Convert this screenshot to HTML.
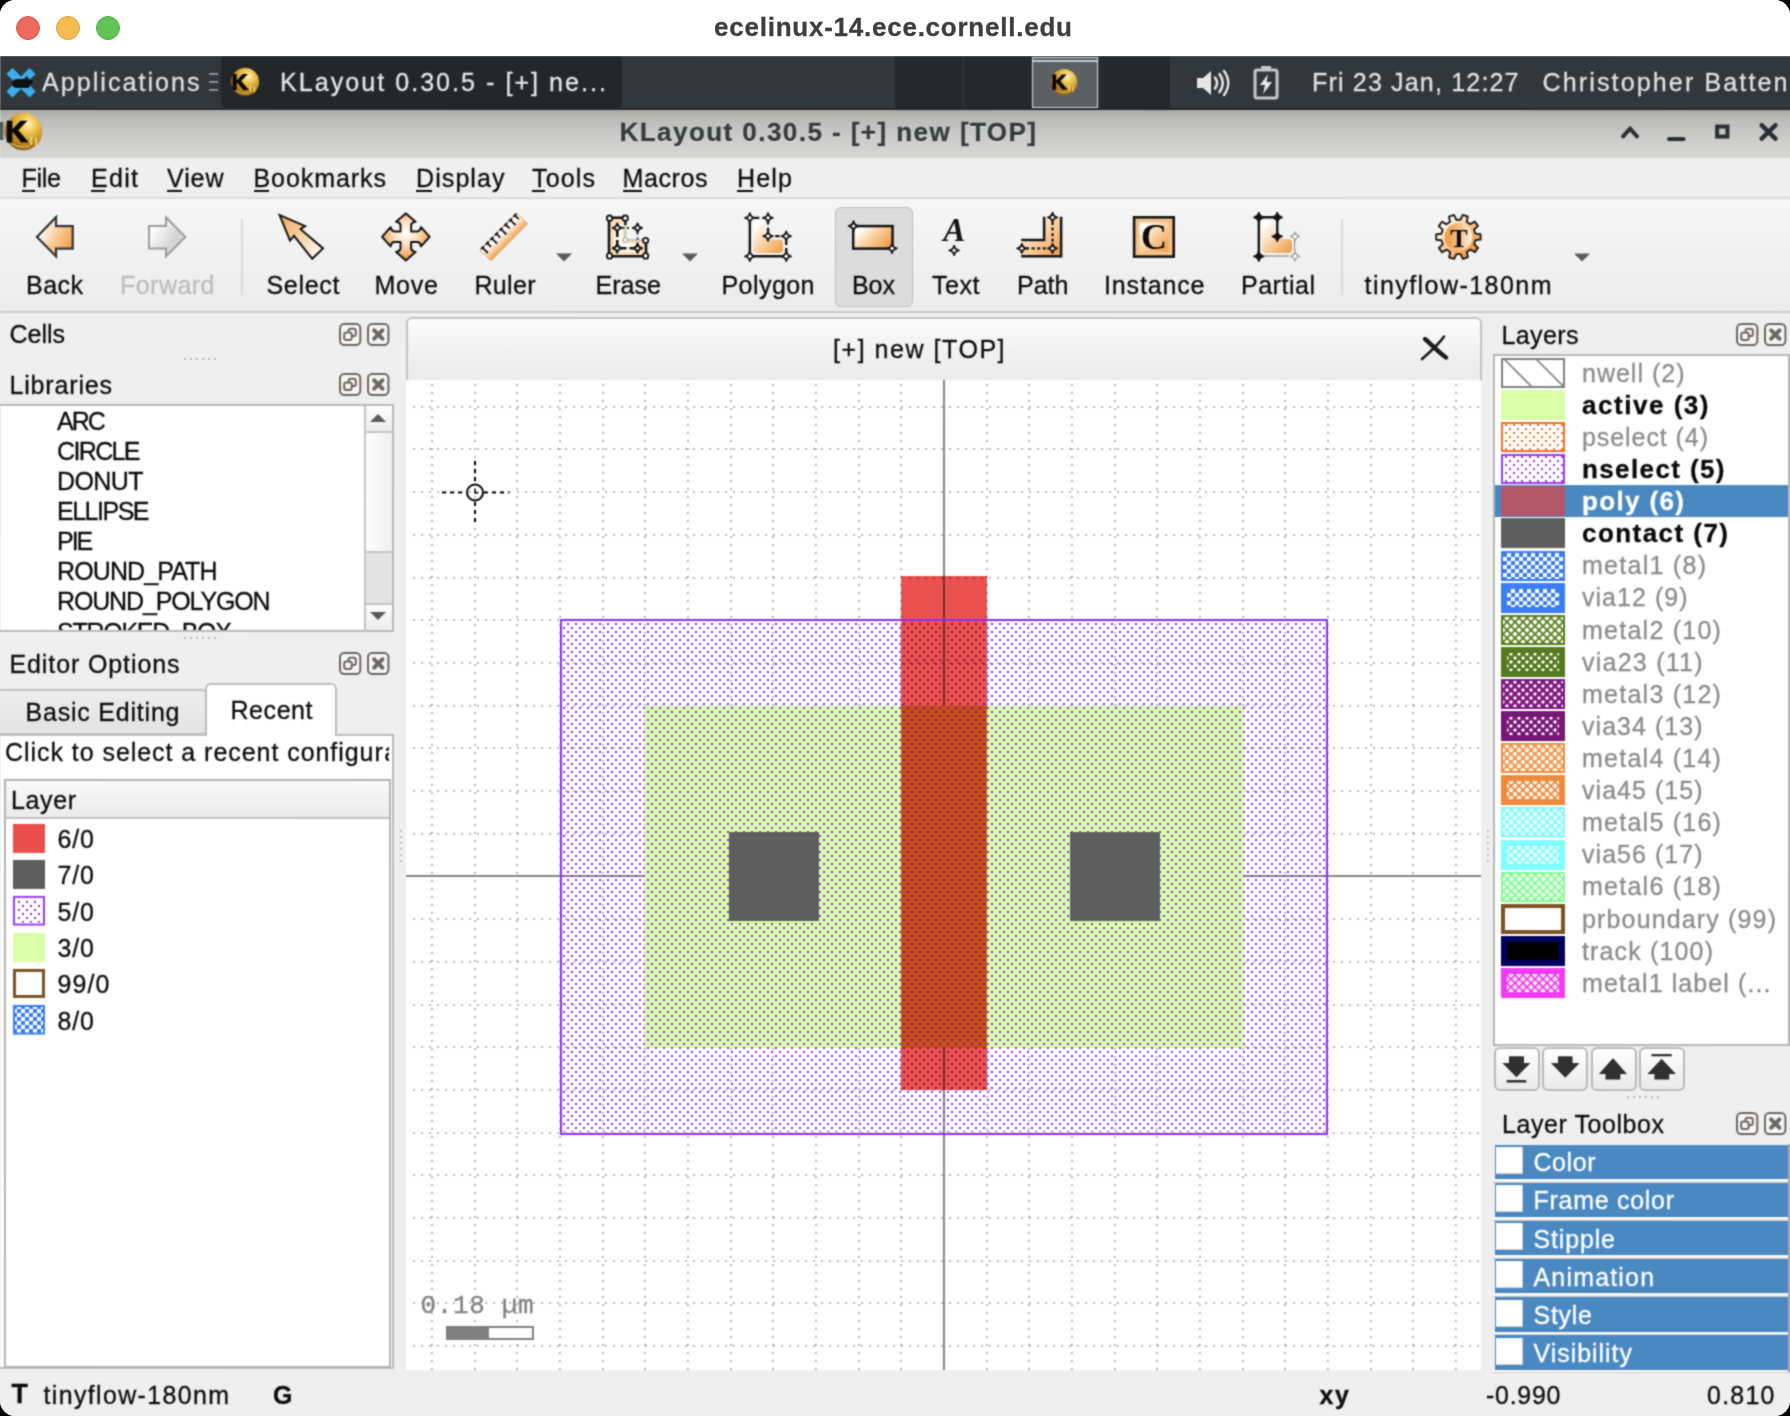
<!DOCTYPE html>
<html><head><meta charset="utf-8"><title>KLayout</title>
<style>

html,body{margin:0;padding:0;background:#000;}
body{width:1790px;height:1416px;overflow:hidden;}
#root{position:absolute;left:0;top:0;width:1790px;height:1416px;overflow:hidden;background:#efefef;border-radius:15.5px;font-family:"Liberation Sans",sans-serif;}
#root div,#root span.t,#root svg{position:absolute;box-sizing:border-box;}
span.t{white-space:pre;line-height:1;-webkit-text-stroke:0.3px;}

</style></head>
<body>
<div id="root">
<svg style="left:0;top:0" width="0" height="0"><defs><filter id="sblur" x="0" y="0" width="100%" height="100%" color-interpolation-filters="sRGB"><feConvolveMatrix order="3" kernelMatrix="1 3 1 3 9 3 1 3 1" divisor="25" edgeMode="duplicate"/></filter></defs></svg><div id="x" style="left:0;top:0;width:1790px;height:1416px;background:#efefef;filter:url(#sblur);transform:rotate(0.004deg);"><div style="left:0px;top:56px;width:1790px;height:54px;background:#32373b;"></div><div style="left:0px;top:108px;width:1790px;height:2px;background:#24282b;"></div><div style="left:221px;top:56px;width:401px;height:52px;background:#23272a;border-radius:5px;"></div><div style="left:895px;top:56px;width:275px;height:52px;background:#25292c;"></div><div style="left:962px;top:56px;width:2px;height:52px;background:#2e3236;"></div><div style="left:1031px;top:56px;width:2px;height:52px;background:#2e3236;"></div><div style="left:1098px;top:56px;width:2px;height:52px;background:#2e3236;"></div><div style="left:1032px;top:57px;width:66px;height:51px;background:#5d6063;border:1.5px solid #d8d9d9;"></div><div style="left:1033px;top:60px;width:64px;height:1.5px;background:#c4c5c6;"></div><svg style="left:4px;top:66px" width="34" height="34" viewBox="0 0 34 34"><path d="M5.5 5 L28.5 28.5 M28.5 5 L5.5 28.5" stroke="#3daee9" stroke-width="8.5" stroke-linecap="butt"/><path d="M8 17.5 q0 -4.5 6 -4.5 h6 l3 -3 l1.5 3 q4 0.5 4.5 3 q0 2 -3 2.5 l-1 3.5 h-13 q-4 -0.5 -4 -4.5 z" fill="#0e1113"/></svg><span class="t" style='left:42.0px;top:69.5px;font-size:25px;color:#dfe0e0;letter-spacing:2.06px;'>Applications</span><div style="left:209px;top:73px;width:9px;height:2px;background:#8a8d8f;"></div><div style="left:209px;top:81px;width:9px;height:2px;background:#8a8d8f;"></div><div style="left:209px;top:89px;width:9px;height:2px;background:#8a8d8f;"></div><svg style="left:229px;top:66px" width="32" height="32" viewBox="-16 -16 32 32"><defs><radialGradient id="kg245_82" cx="0.62" cy="0.3" r="0.8"><stop offset="0" stop-color="#fff6b8"/><stop offset="0.3" stop-color="#efc351"/><stop offset="0.7" stop-color="#b9831d"/><stop offset="1" stop-color="#6d4508"/></radialGradient></defs><circle cx="0" cy="0" r="14" fill="url(#kg245_82)"/><path d="M-12.5 -8 h4.2 v6.4 l6 -6.4 h5.2 l-6.8 7 l7.8 9.2 h-5.6 l-6.6 -8 v8 h-4.2 z" fill="#0b0905"/><path d="M5.5 3.5 v6.5 M9.5 5 v5.5" stroke="#f9e08a" stroke-width="1.1"/><path d="M-9 9 q6 4 13 2" stroke="#f3d27a" stroke-width="0.9" fill="none" opacity="0.8"/></svg><span class="t" style='left:280.0px;top:69.5px;font-size:25px;color:#e4e5e5;letter-spacing:2.06px;'>KLayout 0.30.5 - [+] ne...</span><svg style="left:1049px;top:67px" width="30" height="30" viewBox="-16 -16 32 32"><defs><radialGradient id="kg1064_82" cx="0.62" cy="0.3" r="0.8"><stop offset="0" stop-color="#fff6b8"/><stop offset="0.3" stop-color="#efc351"/><stop offset="0.7" stop-color="#b9831d"/><stop offset="1" stop-color="#6d4508"/></radialGradient></defs><circle cx="0" cy="0" r="14" fill="url(#kg1064_82)"/><path d="M-12.5 -8 h4.2 v6.4 l6 -6.4 h5.2 l-6.8 7 l7.8 9.2 h-5.6 l-6.6 -8 v8 h-4.2 z" fill="#0b0905"/><path d="M5.5 3.5 v6.5 M9.5 5 v5.5" stroke="#f9e08a" stroke-width="1.1"/><path d="M-9 9 q6 4 13 2" stroke="#f3d27a" stroke-width="0.9" fill="none" opacity="0.8"/></svg><svg style="left:1196px;top:68px" width="34" height="30" viewBox="0 0 34 30"><path d="M1 10 h6 l8 -7 v24 l-8 -7 h-6 z" fill="#e6e6e6"/><path d="M19 9.5 q4 5.5 0 11" stroke="#e6e6e6" stroke-width="2.6" fill="none" stroke-linecap="round"/><path d="M23.5 6 q6.5 9 0 18" stroke="#e6e6e6" stroke-width="2.6" fill="none" stroke-linecap="round"/><path d="M28 3 q8.5 12 0 24" stroke="#e6e6e6" stroke-width="2.4" fill="none" stroke-linecap="round"/></svg><svg style="left:1252px;top:65px" width="28" height="36" viewBox="0 0 28 36"><rect x="9" y="1" width="10" height="5" fill="#c8c8c8"/><rect x="3" y="5" width="22" height="28" rx="2" fill="none" stroke="#c8c8c8" stroke-width="3"/><path d="M16 9 L8 20 h5 l-2 9 l9 -12 h-5.5 z" fill="#e6e6e6"/></svg><span class="t" style='left:1312.0px;top:69.5px;font-size:25px;color:#dfe0e0;letter-spacing:1.18px;'>Fri 23 Jan, 12:27</span><span class="t" style='left:1542.5px;top:69.5px;font-size:25px;color:#dfe0e0;letter-spacing:2.15px;'>Christopher Batten</span><div style="left:0px;top:110px;width:1790px;height:48px;background:linear-gradient(#a9a9a7 0%,#bcbcba 22%,#cbcbc9 55%,#d6d6d4 100%);"></div><svg style="left:1.5px;top:110.0px" width="43.0" height="43.0" viewBox="-16 -16 32 32"><defs><radialGradient id="kg23_131" cx="0.62" cy="0.3" r="0.8"><stop offset="0" stop-color="#fff6b8"/><stop offset="0.3" stop-color="#efc351"/><stop offset="0.7" stop-color="#b9831d"/><stop offset="1" stop-color="#6d4508"/></radialGradient></defs><circle cx="0" cy="0" r="14" fill="url(#kg23_131)"/><path d="M-12.5 -8 h4.2 v6.4 l6 -6.4 h5.2 l-6.8 7 l7.8 9.2 h-5.6 l-6.6 -8 v8 h-4.2 z" fill="#0b0905"/><path d="M5.5 3.5 v6.5 M9.5 5 v5.5" stroke="#f9e08a" stroke-width="1.1"/><path d="M-9 9 q6 4 13 2" stroke="#f3d27a" stroke-width="0.9" fill="none" opacity="0.8"/></svg><div style="left:0px;top:122px;width:5px;height:18px;background:linear-gradient(90deg,#1a1a1a,rgba(30,30,30,0));"></div><span class="t" style='left:619.5px;top:118.7px;font-size:26px;color:#373b3e;font-weight:700;letter-spacing:1.45px;text-shadow:0 1px 0 rgba(255,255,255,.6);'>KLayout 0.30.5 - [+] new [TOP]</span><svg style="left:1610px;top:118px" width="180" height="32" viewBox="0 0 180 32"><g stroke="#2b2f33" fill="none" stroke-width="4"><path d="M13 18.3 L20 10.6 L27 18.3" stroke-linecap="round" stroke-linejoin="miter"/><path d="M59 21 h14.5" stroke-linecap="round"/><rect x="107.1" y="8.5" width="10.3" height="10"/><path d="M151.6 7.1 L165.4 20.6 M165.4 7.1 L151.6 20.6" stroke-width="4.4" stroke-linecap="round"/></g></svg><div style="left:0px;top:158px;width:1790px;height:41px;background:#efefef;"></div><div style="left:0px;top:197px;width:1790px;height:2px;background:#dcdcdc;"></div><span class="t" style='left:21.5px;top:165.5px;font-size:25px;color:#0d0d0d;letter-spacing:-0.27px;'>File</span><div style="left:21.5px;top:190px;width:13px;height:2px;background:#0d0d0d;"></div><span class="t" style='left:91.0px;top:165.5px;font-size:25px;color:#0d0d0d;letter-spacing:1.30px;'>Edit</span><div style="left:91px;top:190px;width:14px;height:2px;background:#0d0d0d;"></div><span class="t" style='left:167.0px;top:165.5px;font-size:25px;color:#0d0d0d;letter-spacing:0.92px;'>View</span><div style="left:167px;top:190px;width:15px;height:2px;background:#0d0d0d;"></div><span class="t" style='left:253.5px;top:165.5px;font-size:25px;color:#0d0d0d;letter-spacing:0.93px;'>Bookmarks</span><div style="left:253.5px;top:190px;width:15px;height:2px;background:#0d0d0d;"></div><span class="t" style='left:416.0px;top:165.5px;font-size:25px;color:#0d0d0d;letter-spacing:1.09px;'>Display</span><div style="left:416px;top:190px;width:16px;height:2px;background:#0d0d0d;"></div><span class="t" style='left:532.0px;top:165.5px;font-size:25px;color:#0d0d0d;letter-spacing:1.16px;'>Tools</span><div style="left:532px;top:190px;width:13px;height:2px;background:#0d0d0d;"></div><span class="t" style='left:622.5px;top:165.5px;font-size:25px;color:#0d0d0d;letter-spacing:0.61px;'>Macros</span><div style="left:622.5px;top:190px;width:19px;height:2px;background:#0d0d0d;"></div><span class="t" style='left:737.0px;top:165.5px;font-size:25px;color:#0d0d0d;letter-spacing:1.19px;'>Help</span><div style="left:737px;top:190px;width:16px;height:2px;background:#0d0d0d;"></div><div style="left:0px;top:199px;width:1790px;height:113px;background:linear-gradient(#f6f6f6,#ececec);"></div><div style="left:0px;top:311px;width:1790px;height:2px;background:#c9c9c9;"></div><div style="left:0px;top:313px;width:1790px;height:3px;background:#efefef;"></div><div style="left:835px;top:207px;width:78px;height:100px;background:#dcdcdc;border:1.5px solid #bcbcbc;border-radius:6px;"></div><div style="left:241px;top:219px;width:2px;height:76px;background:#dadada;"></div><div style="left:1340.5px;top:219px;width:2px;height:76px;background:#dadada;"></div><span class="t" style='left:26.0px;top:272.5px;font-size:25px;color:#0d0d0d;letter-spacing:0.47px;'>Back</span><span class="t" style='left:120.0px;top:272.5px;font-size:25px;color:#bdbdbd;letter-spacing:0.47px;'>Forward</span><span class="t" style='left:266.5px;top:272.5px;font-size:25px;color:#0d0d0d;letter-spacing:0.70px;'>Select</span><span class="t" style='left:374.5px;top:272.5px;font-size:25px;color:#0d0d0d;letter-spacing:0.79px;'>Move</span><span class="t" style='left:474.5px;top:272.5px;font-size:25px;color:#0d0d0d;letter-spacing:0.31px;'>Ruler</span><span class="t" style='left:595.5px;top:272.5px;font-size:25px;color:#0d0d0d;letter-spacing:0.05px;'>Erase</span><span class="t" style='left:721.5px;top:272.5px;font-size:25px;color:#0d0d0d;letter-spacing:0.44px;'>Polygon</span><span class="t" style='left:852.0px;top:272.5px;font-size:25px;color:#0d0d0d;letter-spacing:-0.05px;'>Box</span><span class="t" style='left:932.0px;top:272.5px;font-size:25px;color:#0d0d0d;letter-spacing:0.55px;'>Text</span><span class="t" style='left:1017.0px;top:272.5px;font-size:25px;color:#0d0d0d;letter-spacing:0.02px;'>Path</span><span class="t" style='left:1104.0px;top:272.5px;font-size:25px;color:#0d0d0d;letter-spacing:0.85px;'>Instance</span><span class="t" style='left:1241.0px;top:272.5px;font-size:25px;color:#0d0d0d;letter-spacing:0.52px;'>Partial</span><span class="t" style='left:1364.5px;top:272.5px;font-size:25px;color:#0d0d0d;letter-spacing:1.45px;'>tinyflow-180nm</span><svg style="left:555px;top:252px" width="18" height="10" viewBox="0 0 18 10"><path d="M1 1.5 h16 l-8 8 z" fill="#5a5a5a"/></svg><svg style="left:681px;top:252px" width="18" height="10" viewBox="0 0 18 10"><path d="M1 1.5 h16 l-8 8 z" fill="#5a5a5a"/></svg><svg style="left:1572.5px;top:252px" width="18" height="10" viewBox="0 0 18 10"><path d="M1 1.5 h16 l-8 8 z" fill="#5a5a5a"/></svg><svg style="left:0;top:0" width="0" height="0"><defs><linearGradient id="og" x1="0" y1="0" x2="1" y2="1"><stop offset="0.1" stop-color="#fff"/><stop offset="0.5" stop-color="#fad2a4"/><stop offset="1" stop-color="#ee9a42"/></linearGradient><linearGradient id="ogr" x1="0" y1="0" x2="1" y2="1"><stop offset="0" stop-color="#f3a85a"/><stop offset="0.5" stop-color="#f9d2a6"/><stop offset="1" stop-color="#fff"/></linearGradient><linearGradient id="og2" x1="0" y1="0.2" x2="1" y2="0.8"><stop offset="0.1" stop-color="#fff"/><stop offset="0.55" stop-color="#f9c992"/><stop offset="1" stop-color="#ee9a42"/></linearGradient><linearGradient id="gg" x1="0" y1="0.2" x2="1" y2="0.8"><stop offset="0.1" stop-color="#fff"/><stop offset="0.7" stop-color="#d2d2d2"/><stop offset="1" stop-color="#e6e6e6"/></linearGradient><radialGradient id="mv" cx="0.5" cy="0.42" r="0.55"><stop offset="0" stop-color="#fff"/><stop offset="0.45" stop-color="#fbe0c2"/><stop offset="1" stop-color="#ee9a42"/></radialGradient><linearGradient id="rul" x1="0" y1="0" x2="1" y2="1" gradientUnits="objectBoundingBox"><stop offset="0.44" stop-color="#fff"/><stop offset="0.62" stop-color="#f0a04c"/></linearGradient><linearGradient id="gear" x1="0" y1="0" x2="1" y2="1"><stop offset="0.15" stop-color="#fff"/><stop offset="0.5" stop-color="#f8c890"/><stop offset="0.85" stop-color="#ee9238"/></linearGradient><linearGradient id="gdisc" x1="0" y1="0.5" x2="1" y2="0.5"><stop offset="0" stop-color="#ee9a42"/><stop offset="0.55" stop-color="#f6be84"/><stop offset="1" stop-color="#fff4e6"/></linearGradient></defs></svg><svg style="left:28.5px;top:211px" width="52" height="52" viewBox="0 0 52 52"><path d="M7.9 25.9 L27 6.3 V15.1 H43.7 V37.6 H27 V45.4 Z" fill="url(#og2)" stroke="#333" stroke-width="2.2" stroke-linejoin="miter"/></svg><svg style="left:141px;top:211px" width="52" height="52" viewBox="0 0 52 52"><path d="M44.2 25.9 L25 6.3 V15.1 H8 V37.6 H25 V45.4 Z" fill="url(#gg)" stroke="#9c9c9c" stroke-width="2" stroke-linejoin="miter"/></svg><svg style="left:275px;top:211px" width="52" height="52" viewBox="0 0 52 52"><path d="M4.6 4.2 L30 15.2 L25.5 18.2 L48 37.4 L37.2 47.8 L19 24.9 L15 29.6 Z" fill="url(#ogr)" stroke="#141414" stroke-width="2" stroke-linejoin="miter"/></svg><svg style="left:379.7px;top:211px" width="52" height="52" viewBox="0 0 52 52"><path d="M25.8 2.4 L35.5 10.8 Q31.6 11.4 31.1 14 V20.5 H37.5 Q40.4 20 41 16.2 L49.6 25.8 L41 35.4 Q40.4 31.5 37.5 31 H31.1 V37.5 Q31.6 40.4 35.5 41 L25.8 49.5 L16.1 41 Q20 40.4 20.5 37.5 V31 H14 Q11.2 31.5 10.6 35.4 L2 25.8 L10.6 16.2 Q11.2 20 14 20.5 H20.5 V14 Q20 11.4 16.1 10.8 Z" fill="url(#mv)" stroke="#141414" stroke-width="2" stroke-linejoin="round"/></svg><svg style="left:478px;top:211px" width="52" height="52" viewBox="0 0 52 52"><path d="M38.9 2.2 L49.5 12.8 L13.1 49.7 L2 39.2 Z" fill="url(#rul)" stroke="#e9a25a" stroke-width="1"/><path d="M3.0 38.2 L6.1 35.1 M4.5 36.7 L9.8 42.0" stroke="#141414" stroke-width="1.9"/><path d="M7.6 33.6 L10.7 30.5 M9.1 32.0 L13.0 35.9" stroke="#141414" stroke-width="1.9"/><path d="M12.2 29.0 L15.3 25.9 M13.8 27.4 L19.1 32.7" stroke="#141414" stroke-width="1.9"/><path d="M16.8 24.3 L19.9 21.2 M18.4 22.8 L22.3 26.7" stroke="#141414" stroke-width="1.9"/><path d="M21.4 19.7 L24.5 16.6 M23.0 18.2 L28.3 23.5" stroke="#141414" stroke-width="1.9"/><path d="M26.0 15.1 L29.2 12.0 M27.6 13.5 L31.5 17.4" stroke="#141414" stroke-width="1.9"/><path d="M30.7 10.5 L33.8 7.4 M32.2 8.9 L37.5 14.2" stroke="#141414" stroke-width="1.9"/><path d="M35.3 5.8 L38.4 2.7 M36.8 4.3 L40.7 8.2" stroke="#141414" stroke-width="1.9"/></svg><svg style="left:601px;top:211px" width="52" height="52" viewBox="0 0 52 52"><path d="M8 9.7 Q8 6.7 11 6.7 H21.4 Q24.4 6.7 24.4 9.7 V29 H42 Q45 29 45 32 V42.3 Q45 45.3 42 45.3 H11 Q8 45.3 8 42.3 Z" fill="#fbdcb6" stroke="none"/><path d="M13 13 H22 V32 H40 V41 H13 Z" fill="#fff" opacity="0.75"/><path d="M24.4 8 V29 H44" fill="none" stroke="#b9b9b9" stroke-width="1.6"/><path d="M8 9.7 Q8 6.7 11 6.7 H21.4 Q24.4 6.7 24.4 9.7 M45 32 V42.3 Q45 45.3 42 45.3 H11 Q8 45.3 8 42.3 V9.7" fill="none" stroke="#141414" stroke-width="2.6"/><path d="M24.4 8 V14" stroke="#141414" stroke-width="2.4"/><path d="M16.2 21 V33 M20.5 37.2 H32.5" stroke="#141414" stroke-width="2.6" stroke-dasharray="5 3"/><path d="M21 16.9 H32 M36.5 21.5 V32.5" stroke="#141414" stroke-width="1.6" stroke-dasharray="2 3"/><circle cx="8.5" cy="7.2" r="2.7" fill="#fff" stroke="#141414" stroke-width="1.8"/><circle cx="24.2" cy="7.2" r="2.7" fill="#fff" stroke="#141414" stroke-width="1.8"/><circle cx="44.6" cy="29.5" r="2.7" fill="#fff" stroke="#141414" stroke-width="1.8"/><circle cx="44.6" cy="44.9" r="2.7" fill="#fff" stroke="#141414" stroke-width="1.8"/><circle cx="8.5" cy="44.9" r="2.7" fill="#fff" stroke="#141414" stroke-width="1.8"/><circle cx="24.4" cy="29" r="2.2" fill="#fff" stroke="#b0b0b0" stroke-width="1.3"/><path d="M16.2 12.391999999999998 Q16.966359999999998 16.13364 20.708 16.9 Q16.966359999999998 17.666359999999997 16.2 21.408 Q15.433639999999999 17.666359999999997 11.691999999999998 16.9 Q15.433639999999999 16.13364 16.2 12.391999999999998z" fill="#fff" stroke="#141414" stroke-width="1.9" stroke-linejoin="round"/><path d="M36.5 12.391999999999998 Q37.26636 16.13364 41.008 16.9 Q37.26636 17.666359999999997 36.5 21.408 Q35.73364 17.666359999999997 31.991999999999997 16.9 Q35.73364 16.13364 36.5 12.391999999999998z" fill="#fff" stroke="#141414" stroke-width="1.9" stroke-linejoin="round"/><path d="M16.2 32.692 Q16.966359999999998 36.433640000000004 20.708 37.2 Q16.966359999999998 37.96636 16.2 41.708000000000006 Q15.433639999999999 37.96636 11.691999999999998 37.2 Q15.433639999999999 36.433640000000004 16.2 32.692z" fill="#fff" stroke="#141414" stroke-width="1.9" stroke-linejoin="round"/><path d="M36.5 32.692 Q37.26636 36.433640000000004 41.008 37.2 Q37.26636 37.96636 36.5 41.708000000000006 Q35.73364 37.96636 31.991999999999997 37.2 Q35.73364 36.433640000000004 36.5 32.692z" fill="#fff" stroke="#141414" stroke-width="1.9" stroke-linejoin="round"/></svg><svg style="left:741.5px;top:211px" width="52" height="52" viewBox="0 0 52 52"><path d="M11.5 14 Q11.5 10 15.5 10 H19 Q23 10 23 14 V24.5 Q23 28.5 27 28.5 H37 Q41 28.5 41 32.5 V38 Q41 42 37 42 H15.5 Q11.5 42 11.5 38 Z" fill="url(#og)"/><path d="M7.8 6.9 V45.3 H44.2" fill="none" stroke="#141414" stroke-width="2.4"/><path d="M7.8 6.9 H26 V25.1 H44.2 V45.3" fill="none" stroke="#141414" stroke-width="2.4" stroke-dasharray="4.5 3.2" stroke-dashoffset="-5"/><path d="M7.8 2.1159999999999997 Q8.61328 6.08672 12.584 6.9 Q8.61328 7.713280000000001 7.8 11.684000000000001 Q6.98672 7.713280000000001 3.015999999999999 6.9 Q6.98672 6.08672 7.8 2.1159999999999997z" fill="#fff" stroke="#141414" stroke-width="1.8" stroke-linejoin="round"/><path d="M26 2.1159999999999997 Q26.81328 6.08672 30.784 6.9 Q26.81328 7.713280000000001 26 11.684000000000001 Q25.18672 7.713280000000001 21.216 6.9 Q25.18672 6.08672 26 2.1159999999999997z" fill="#fff" stroke="#141414" stroke-width="1.8" stroke-linejoin="round"/><path d="M26 20.316000000000003 Q26.81328 24.286720000000003 30.784 25.1 Q26.81328 25.91328 26 29.884 Q25.18672 25.91328 21.216 25.1 Q25.18672 24.286720000000003 26 20.316000000000003z" fill="#fff" stroke="#141414" stroke-width="1.8" stroke-linejoin="round"/><path d="M44.2 20.316000000000003 Q45.01328 24.286720000000003 48.984 25.1 Q45.01328 25.91328 44.2 29.884 Q43.386720000000004 25.91328 39.416000000000004 25.1 Q43.386720000000004 24.286720000000003 44.2 20.316000000000003z" fill="#fff" stroke="#141414" stroke-width="1.8" stroke-linejoin="round"/><path d="M44.2 40.516 Q45.01328 44.48672 48.984 45.3 Q45.01328 46.113279999999996 44.2 50.083999999999996 Q43.386720000000004 46.113279999999996 39.416000000000004 45.3 Q43.386720000000004 44.48672 44.2 40.516z" fill="#fff" stroke="#141414" stroke-width="1.8" stroke-linejoin="round"/><path d="M7.8 40.516 Q8.61328 44.48672 12.584 45.3 Q8.61328 46.113279999999996 7.8 50.083999999999996 Q6.98672 46.113279999999996 3.015999999999999 45.3 Q6.98672 44.48672 7.8 40.516z" fill="#fff" stroke="#141414" stroke-width="1.8" stroke-linejoin="round"/></svg><svg style="left:847px;top:211px" width="52" height="52" viewBox="0 0 52 52"><rect x="6.2" y="15.1" width="39.3" height="22.5" fill="url(#og2)" stroke="#141414" stroke-width="2.5"/><path d="M6.5 10.216 Q7.313280000000001 14.18672 11.284 15 Q7.313280000000001 15.81328 6.5 19.784 Q5.686719999999999 15.81328 1.7159999999999993 15 Q5.686719999999999 14.18672 6.5 10.216z" fill="#fff" stroke="#141414" stroke-width="1.8" stroke-linejoin="round"/><path d="M45 32.616 Q45.81328 36.58672 49.784 37.4 Q45.81328 38.21328 45 42.184 Q44.18672 38.21328 40.216 37.4 Q44.18672 36.58672 45 32.616z" fill="#fff" stroke="#141414" stroke-width="1.8" stroke-linejoin="round"/></svg><svg style="left:929px;top:211px" width="52" height="52" viewBox="0 0 52 52"><text x="25.2" y="29.8" text-anchor="middle" font-family="Liberation Serif, serif" font-style="italic" font-weight="700" font-size="33" fill="#141414">A</text><path d="M25.1 34.616 Q25.91328 38.58672 29.884 39.4 Q25.91328 40.21328 25.1 44.184 Q24.286720000000003 40.21328 20.316000000000003 39.4 Q24.286720000000003 38.58672 25.1 34.616z" fill="#fff" stroke="#141414" stroke-width="1.8" stroke-linejoin="round"/></svg><svg style="left:1014px;top:211px" width="52" height="52" viewBox="0 0 52 52"><path d="M7.2 29 H30.1 V5.7 H47.1 V45.3 H7.2 Z" fill="url(#og)" stroke="none"/><path d="M7.2 29 H30.1 V5.7 M47.1 5.7 V45.3 H7.2" fill="none" stroke="#141414" stroke-width="2.5"/><path d="M12 37.4 H34 M38.5 11 V33" fill="none" stroke="#141414" stroke-width="2.2" stroke-dasharray="3 2.6"/><path d="M38.5 1.6999999999999993 Q39.282000000000004 5.518 43.1 6.3 Q39.282000000000004 7.082 38.5 10.9 Q37.717999999999996 7.082 33.9 6.3 Q37.717999999999996 5.518 38.5 1.6999999999999993z" fill="#fff" stroke="#141414" stroke-width="1.8" stroke-linejoin="round"/><path d="M7.8 32.8 Q8.582 36.617999999999995 12.4 37.4 Q8.582 38.182 7.8 42.0 Q7.018 38.182 3.1999999999999993 37.4 Q7.018 36.617999999999995 7.8 32.8z" fill="#fff" stroke="#141414" stroke-width="1.8" stroke-linejoin="round"/><path d="M38.5 32.8 Q39.282000000000004 36.617999999999995 43.1 37.4 Q39.282000000000004 38.182 38.5 42.0 Q37.717999999999996 38.182 33.9 37.4 Q37.717999999999996 36.617999999999995 38.5 32.8z" fill="#fff" stroke="#141414" stroke-width="1.8" stroke-linejoin="round"/></svg><svg style="left:1128px;top:211px" width="52" height="52" viewBox="0 0 52 52"><rect x="6.1" y="6.3" width="39.6" height="39.3" fill="#f6c08a" stroke="#141414" stroke-width="2.6"/><rect x="11.5" y="11.5" width="29" height="29" fill="url(#og)"/><text x="26" y="38.4" text-anchor="middle" font-family="Liberation Serif, serif" font-weight="700" font-size="36" fill="#0a0a0a">C</text></svg><svg style="left:1251px;top:211px" width="52" height="52" viewBox="0 0 52 52"><path d="M11 13 Q11 10 14 10 H20 Q23 10 23 13 V22 Q23 28 29 28 H37 Q41 28 41 32 V38 Q41 42 37 42 H15 Q11 42 11 38 Z" fill="url(#og)"/><path d="M7.8 45.3 V6.3 H26.2 V25.4" fill="none" stroke="#141414" stroke-width="2.4"/><path d="M13 45 H38 M43.5 30 V40" stroke="#9aa0a8" stroke-width="1.4"/><path d="M7.8 1.5159999999999991 Q8.61328 5.48672 12.584 6.3 Q8.61328 7.11328 7.8 11.084 Q6.98672 7.11328 3.015999999999999 6.3 Q6.98672 5.48672 7.8 1.5159999999999991z" fill="#141414" stroke="#141414" stroke-width="1.7" stroke-linejoin="round"/><path d="M26.2 1.5159999999999991 Q27.013279999999998 5.48672 30.984 6.3 Q27.013279999999998 7.11328 26.2 11.084 Q25.38672 7.11328 21.415999999999997 6.3 Q25.38672 5.48672 26.2 1.5159999999999991z" fill="#141414" stroke="#141414" stroke-width="1.7" stroke-linejoin="round"/><path d="M26.2 20.616 Q27.013279999999998 24.58672 30.984 25.4 Q27.013279999999998 26.213279999999997 26.2 30.183999999999997 Q25.38672 26.213279999999997 21.415999999999997 25.4 Q25.38672 24.58672 26.2 20.616z" fill="#141414" stroke="#141414" stroke-width="1.7" stroke-linejoin="round"/><path d="M7.8 40.516 Q8.61328 44.48672 12.584 45.3 Q8.61328 46.113279999999996 7.8 50.083999999999996 Q6.98672 46.113279999999996 3.015999999999999 45.3 Q6.98672 44.48672 7.8 40.516z" fill="#141414" stroke="#141414" stroke-width="1.7" stroke-linejoin="round"/><path d="M44 20.799999999999997 Q44.782000000000004 24.618 48.6 25.4 Q44.782000000000004 26.182 44 30.0 Q43.217999999999996 26.182 39.4 25.4 Q43.217999999999996 24.618 44 20.799999999999997z" fill="#fff" stroke="#9a9a9a" stroke-width="1.3" stroke-linejoin="round"/><path d="M44 40.699999999999996 Q44.782000000000004 44.517999999999994 48.6 45.3 Q44.782000000000004 46.082 44 49.9 Q43.217999999999996 46.082 39.4 45.3 Q43.217999999999996 44.517999999999994 44 40.699999999999996z" fill="#fff" stroke="#9a9a9a" stroke-width="1.3" stroke-linejoin="round"/></svg><svg style="left:1432px;top:211px" width="52" height="52" viewBox="0 0 52 52"><path d="M28.5 8.7 L30.6 3.9 L35.7 5.5 L34.7 10.7 L38.2 13.2 L42.8 10.6 L45.9 14.9 L42.0 18.5 L43.4 22.6 L48.6 23.1 L48.6 28.5 L43.4 29.1 L42.1 33.2 L46.0 36.7 L42.9 41.1 L38.3 38.5 L34.8 41.0 L35.9 46.2 L30.8 47.9 L28.6 43.1 L24.3 43.1 L22.2 47.9 L17.1 46.3 L18.1 41.1 L14.6 38.6 L10.0 41.2 L6.9 36.9 L10.8 33.3 L9.4 29.2 L4.2 28.7 L4.2 23.3 L9.4 22.7 L10.7 18.6 L6.8 15.1 L9.9 10.7 L14.5 13.3 L18.0 10.8 L16.9 5.6 L22.0 3.9 L24.2 8.7 Z" fill="url(#gear)" stroke="#1c1c1c" stroke-width="1.9" stroke-linejoin="round"/><circle cx="26.4" cy="25.9" r="13.8" fill="url(#gdisc)"/><text x="26.799999999999997" y="35.6" text-anchor="middle" font-family="Liberation Serif, serif" font-weight="700" font-size="26" fill="#0a0a0a">T</text></svg><span class="t" style='left:9.5px;top:322.0px;font-size:25px;color:#0d0d0d;letter-spacing:-0.02px;'>Cells</span><svg style="left:339.2px;top:323px" width="52" height="24" viewBox="0 0 52 24"><rect x="1" y="1" width="20.3" height="21" rx="4.2" fill="#f5f5f5" stroke="#6b6966" stroke-width="2"/><rect x="9.5" y="5.8" width="7.3" height="7.3" rx="2.2" fill="none" stroke="#6b6966" stroke-width="2"/><rect x="5.2" y="9.4" width="7.5" height="7.6" rx="2.2" fill="#f5f5f5" stroke="#6b6966" stroke-width="2"/><rect x="29" y="1" width="20.4" height="21" rx="4.2" fill="#f5f5f5" stroke="#6b6966" stroke-width="2"/><path d="M35.2 7.3 L43.4 15.7 M43.4 7.3 L35.2 15.7" stroke="#6b6966" stroke-width="4" stroke-linecap="round"/></svg><div style="left:183.5px;top:358px;width:2px;height:2px;background:#bcbcbc;"></div><div style="left:189.5px;top:358px;width:2px;height:2px;background:#bcbcbc;"></div><div style="left:195.5px;top:358px;width:2px;height:2px;background:#bcbcbc;"></div><div style="left:201.5px;top:358px;width:2px;height:2px;background:#bcbcbc;"></div><div style="left:207.5px;top:358px;width:2px;height:2px;background:#bcbcbc;"></div><div style="left:213.5px;top:358px;width:2px;height:2px;background:#bcbcbc;"></div><span class="t" style='left:9.5px;top:372.5px;font-size:25px;color:#0d0d0d;letter-spacing:0.83px;'>Libraries</span><svg style="left:339.2px;top:373px" width="52" height="24" viewBox="0 0 52 24"><rect x="1" y="1" width="20.3" height="21" rx="4.2" fill="#f5f5f5" stroke="#6b6966" stroke-width="2"/><rect x="9.5" y="5.8" width="7.3" height="7.3" rx="2.2" fill="none" stroke="#6b6966" stroke-width="2"/><rect x="5.2" y="9.4" width="7.5" height="7.6" rx="2.2" fill="#f5f5f5" stroke="#6b6966" stroke-width="2"/><rect x="29" y="1" width="20.4" height="21" rx="4.2" fill="#f5f5f5" stroke="#6b6966" stroke-width="2"/><path d="M35.2 7.3 L43.4 15.7 M43.4 7.3 L35.2 15.7" stroke="#6b6966" stroke-width="4" stroke-linecap="round"/></svg><div style="left:-2px;top:404px;width:396px;height:228px;background:#fff;border:2px solid #b9b9b9;overflow:hidden;"></div><span class="t" style='left:57.0px;top:408.5px;font-size:25px;color:#0d0d0d;letter-spacing:-2.00px;'>ARC</span><span class="t" style='left:57.0px;top:438.7px;font-size:25px;color:#0d0d0d;letter-spacing:-1.64px;'>CIRCLE</span><span class="t" style='left:57.0px;top:468.8px;font-size:25px;color:#0d0d0d;letter-spacing:-0.60px;'>DONUT</span><span class="t" style='left:57.0px;top:499.0px;font-size:25px;color:#0d0d0d;letter-spacing:-1.49px;'>ELLIPSE</span><span class="t" style='left:57.0px;top:529.1px;font-size:25px;color:#0d0d0d;letter-spacing:-2.00px;'>PIE</span><span class="t" style='left:57.0px;top:559.3px;font-size:25px;color:#0d0d0d;letter-spacing:-0.89px;'>ROUND_PATH</span><span class="t" style='left:57.0px;top:589.4px;font-size:25px;color:#0d0d0d;letter-spacing:-1.15px;'>ROUND_POLYGON</span><div style="left:0;top:606px;width:364px;height:24px;overflow:hidden;"><span class="t" style='left:57.0px;top:13.6px;font-size:25px;color:#0d0d0d;letter-spacing:-1.26px;'>STROKED_BOX</span></div><div style="left:364px;top:406px;width:28px;height:224px;background:linear-gradient(90deg,#fdfdfd,#f0f0f0);border-left:2px solid #c4c4c4;"></div><div style="left:364px;top:406px;width:28px;height:27px;background:linear-gradient(#fdfdfd,#ececec);border-left:2px solid #c4c4c4;border-bottom:2px solid #c4c4c4;"></div><div style="left:364px;top:603px;width:28px;height:27px;background:linear-gradient(#fdfdfd,#ececec);border-left:2px solid #c4c4c4;border-top:2px solid #c4c4c4;"></div><div style="left:366px;top:551px;width:26px;height:52px;background:#e4e4e4;border-top:2px solid #c6c6c6;"></div><svg style="left:369px;top:413px" width="18" height="10"><path d="M1 9 h16 l-8 -8 z" fill="#5a5a5a"/></svg><svg style="left:369px;top:611px" width="18" height="10"><path d="M1 1 h16 l-8 8 z" fill="#5a5a5a"/></svg><div style="left:183.5px;top:637px;width:2px;height:2px;background:#bcbcbc;"></div><div style="left:189.5px;top:637px;width:2px;height:2px;background:#bcbcbc;"></div><div style="left:195.5px;top:637px;width:2px;height:2px;background:#bcbcbc;"></div><div style="left:201.5px;top:637px;width:2px;height:2px;background:#bcbcbc;"></div><div style="left:207.5px;top:637px;width:2px;height:2px;background:#bcbcbc;"></div><div style="left:213.5px;top:637px;width:2px;height:2px;background:#bcbcbc;"></div><span class="t" style='left:9.5px;top:651.5px;font-size:25px;color:#0d0d0d;letter-spacing:0.89px;'>Editor Options</span><svg style="left:339.2px;top:652.3px" width="52" height="24" viewBox="0 0 52 24"><rect x="1" y="1" width="20.3" height="21" rx="4.2" fill="#f5f5f5" stroke="#6b6966" stroke-width="2"/><rect x="9.5" y="5.8" width="7.3" height="7.3" rx="2.2" fill="none" stroke="#6b6966" stroke-width="2"/><rect x="5.2" y="9.4" width="7.5" height="7.6" rx="2.2" fill="#f5f5f5" stroke="#6b6966" stroke-width="2"/><rect x="29" y="1" width="20.4" height="21" rx="4.2" fill="#f5f5f5" stroke="#6b6966" stroke-width="2"/><path d="M35.2 7.3 L43.4 15.7 M43.4 7.3 L35.2 15.7" stroke="#6b6966" stroke-width="4" stroke-linecap="round"/></svg><div style="left:-2px;top:734px;width:396px;height:635px;background:#fff;border:2px solid #bdbdbd;"></div><div style="left:0px;top:689px;width:207px;height:46px;background:linear-gradient(#ededed,#e3e3e3);border:2px solid #c2c2c2;border-left:none;border-radius:0 5px 0 0;"></div><div style="left:205px;top:683px;width:132px;height:53px;background:#fff;border:2px solid #bdbdbd;border-bottom:none;border-radius:6px 6px 0 0;"></div><span class="t" style='left:25.5px;top:699.5px;font-size:25px;color:#0d0d0d;letter-spacing:0.79px;'>Basic Editing</span><span class="t" style='left:230.5px;top:697.5px;font-size:25px;color:#0d0d0d;letter-spacing:0.56px;'>Recent</span><div style="left:0;top:736px;width:389px;height:40px;overflow:hidden;"><span class="t" style='left:5.0px;top:4.0px;font-size:25px;color:#0d0d0d;letter-spacing:0.95px;'>Click to select a recent configur</span><span class="t" style='left:384.2px;top:4.0px;font-size:25px;color:#0d0d0d;'>ation</span></div><div style="left:4px;top:779px;width:387px;height:589px;background:#fff;border:2px solid #b4b4b4;"></div><div style="left:6px;top:781px;width:383px;height:38px;background:linear-gradient(#f9f9f9,#ebebeb);border-bottom:2px solid #c3c3c3;"></div><span class="t" style='left:11.0px;top:788.0px;font-size:25px;color:#0d0d0d;letter-spacing:0.61px;'>Layer</span><div style="left:12.5px;top:823.5px;width:32px;height:29.6px;background:#eb4f4d;"></div><span class="t" style='left:57.5px;top:827.0px;font-size:25px;color:#0d0d0d;letter-spacing:0.87px;'>6/0</span><div style="left:12.5px;top:859.85px;width:32px;height:29.6px;background:#5e5e5e;"></div><span class="t" style='left:57.5px;top:863.4px;font-size:25px;color:#0d0d0d;letter-spacing:0.87px;'>7/0</span><svg style="left:12.5px;top:896.2px" width="32" height="29.6"><rect x="0" y="0" width="32" height="29.6" fill="#fff"/><rect x="3" y="3" width="26" height="23.6" fill="url(#pdots_p)"/><rect x="1" y="1" width="30" height="27.6" fill="none" stroke="#9a3cf5" stroke-width="2"/></svg><span class="t" style='left:57.5px;top:899.7px;font-size:25px;color:#0d0d0d;letter-spacing:0.87px;'>5/0</span><div style="left:12.5px;top:932.55px;width:32px;height:29.6px;background:#d9ffa8;"></div><span class="t" style='left:57.5px;top:936.1px;font-size:25px;color:#0d0d0d;letter-spacing:0.87px;'>3/0</span><div style="left:12.5px;top:968.9px;width:32px;height:29.6px;background:#fff;border:3.5px solid #7a5422;"></div><span class="t" style='left:57.5px;top:972.4px;font-size:25px;color:#0d0d0d;letter-spacing:1.11px;'>99/0</span><svg style="left:12.5px;top:1005.25px" width="32" height="29.6"><rect x="0" y="0" width="32" height="29.6" fill="#3b7df2"/><rect x="2" y="2" width="28" height="25.6" fill="url(#pchk_b)"/></svg><span class="t" style='left:57.5px;top:1008.8px;font-size:25px;color:#0d0d0d;letter-spacing:0.87px;'>8/0</span><svg style="left:0;top:0" width="0" height="0"><defs><pattern id="pdots" patternUnits="userSpaceOnUse" x="0" y="0" width="8" height="8"><rect x="7" y="7" width="2" height="2" fill="#8f2cf5"/><rect x="3" y="3" width="2" height="2" fill="#8f2cf5"/><rect x="-1" y="7" width="2" height="2" fill="#8f2cf5"/><rect x="7" y="-1" width="2" height="2" fill="#8f2cf5"/><rect x="-1" y="-1" width="2" height="2" fill="#8f2cf5"/></pattern><pattern id="pdots_r" patternUnits="userSpaceOnUse" x="0" y="0" width="8" height="8"><rect x="7" y="7" width="2" height="2" fill="#8a1648"/><rect x="3" y="3" width="2" height="2" fill="#8a1648"/><rect x="-1" y="7" width="2" height="2" fill="#8a1648"/><rect x="7" y="-1" width="2" height="2" fill="#8a1648"/><rect x="-1" y="-1" width="2" height="2" fill="#8a1648"/></pattern><pattern id="pdots_p" patternUnits="userSpaceOnUse" x="0" y="0" width="8" height="8"><rect x="5" y="5" width="2" height="2" fill="#8f2cf5"/><rect x="1" y="1" width="2" height="2" fill="#8f2cf5"/></pattern><pattern id="pdots_o" patternUnits="userSpaceOnUse" x="0" y="0" width="8" height="8"><rect x="5" y="5" width="2" height="2" fill="#f0702c"/><rect x="1" y="1" width="2" height="2" fill="#f0702c"/></pattern><pattern id="pchk_b" patternUnits="userSpaceOnUse" x="0" y="0" width="8" height="8"><rect x="0" y="0" width="8" height="8" fill="#fff"/><rect x="0" y="0" width="4" height="4" fill="#3b7df2"/><rect x="4" y="4" width="4" height="4" fill="#3b7df2"/></pattern></defs></svg><div style="left:406px;top:317px;width:1076px;height:64px;background:linear-gradient(#fbfbfb,#f0f0f0 60%,#ebebeb);border:2px solid #c3c3c3;border-bottom:none;border-radius:6px 6px 0 0;"></div><span class="t" style='left:833.0px;top:336.5px;font-size:25px;color:#0d0d0d;letter-spacing:1.54px;'>[+] new [TOP]</span><svg style="left:1418px;top:332px" width="34" height="32" viewBox="0 0 34 32"><path d="M7 7 C12 11 20 20 28 25.5" stroke="#1a1a1a" stroke-width="4.4" fill="none" stroke-linecap="round"/><path d="M26 4.5 C21 12 12 20 4 27" stroke="#1a1a1a" stroke-width="2.6" fill="none" stroke-linecap="round"/></svg><svg style="left:406px;top:380px" width="1075" height="990" viewBox="406 380 1075 990" shape-rendering="crispEdges"><rect x="406" y="380" width="1075" height="990" fill="#fff"/><path d="M432 384V1370M475 384V1370M517 384V1370M560 384V1370M603 384V1370M645 384V1370M688 384V1370M731 384V1370M773 384V1370M816 384V1370M859 384V1370M901 384V1370M944 384V1370M987 384V1370M1029 384V1370M1072 384V1370M1115 384V1370M1157 384V1370M1200 384V1370M1243 384V1370M1285 384V1370M1328 384V1370M1371 384V1370M1413 384V1370M1456 384V1370" stroke="#b8b8b8" stroke-width="2" stroke-dasharray="2 6" fill="none"/><path d="M413 407H1481M413 449H1481M413 492H1481M413 535H1481M413 578H1481M413 620H1481M413 663H1481M413 706H1481M413 748H1481M413 791H1481M413 834H1481M413 876H1481M413 919H1481M413 962H1481M413 1005H1481M413 1047H1481M413 1090H1481M413 1133H1481M413 1175H1481M413 1218H1481M413 1261H1481M413 1303H1481M413 1346H1481" stroke="#b8b8b8" stroke-width="2" stroke-dasharray="2 6" fill="none"/><rect x="943" y="380" width="2" height="990" fill="#858585"/><rect x="406" y="875" width="1075" height="2" fill="#858585"/><rect x="644.5" y="705.5" width="599.5" height="342" fill="#d9ffa8"/><rect x="901" y="576" width="86" height="514" fill="#eb524f" style="mix-blend-mode:multiply"/><rect x="901" y="705.5" width="86" height="342" fill="#c34f21"/><rect x="562" y="620" width="764" height="512" fill="url(#pdots)"/><rect x="901" y="620" width="86" height="470" fill="url(#pdots_r)"/><rect x="561" y="619.5" width="766" height="514" fill="none" stroke="#8f2cf5" stroke-width="2"/><rect x="729" y="832" width="89.5" height="89" fill="#5f5f5f"/><rect x="1069.5" y="832" width="90" height="89" fill="#5f5f5f"/><g shape-rendering="auto" stroke="#000" stroke-width="2" fill="none"><circle cx="475" cy="492.5" r="8"/><path d="M475 461 V483 M475 502 V526 M442 492.5 H466 M484 492.5 H509" stroke-dasharray="4 4"/><path d="M475 489 v4 h3" stroke-width="1.6"/></g><rect x="447" y="1326.5" width="86" height="12" fill="#fff" stroke="#808080" stroke-width="2"/><rect x="447" y="1326.5" width="42" height="12" fill="#808080"/></svg><span class="t" style='left:420.5px;top:1292.9px;font-size:26px;color:#808080;font-family:"Liberation Mono", monospace;letter-spacing:0.63px;'>0.18 µm</span><div style="left:399.5px;top:829.5px;width:2px;height:2px;background:#bdbdbd;"></div><div style="left:1486.5px;top:829.5px;width:2px;height:2px;background:#bdbdbd;"></div><div style="left:399.5px;top:835.5px;width:2px;height:2px;background:#bdbdbd;"></div><div style="left:1486.5px;top:835.5px;width:2px;height:2px;background:#bdbdbd;"></div><div style="left:399.5px;top:841.5px;width:2px;height:2px;background:#bdbdbd;"></div><div style="left:1486.5px;top:841.5px;width:2px;height:2px;background:#bdbdbd;"></div><div style="left:399.5px;top:847.5px;width:2px;height:2px;background:#bdbdbd;"></div><div style="left:1486.5px;top:847.5px;width:2px;height:2px;background:#bdbdbd;"></div><div style="left:399.5px;top:853.5px;width:2px;height:2px;background:#bdbdbd;"></div><div style="left:1486.5px;top:853.5px;width:2px;height:2px;background:#bdbdbd;"></div><div style="left:399.5px;top:859.5px;width:2px;height:2px;background:#bdbdbd;"></div><div style="left:1486.5px;top:859.5px;width:2px;height:2px;background:#bdbdbd;"></div><span class="t" style='left:1501.5px;top:322.5px;font-size:25px;color:#0d0d0d;letter-spacing:0.39px;'>Layers</span><svg style="left:1735.5px;top:323.3px" width="52" height="24" viewBox="0 0 52 24"><rect x="1" y="1" width="20.3" height="21" rx="4.2" fill="#f5f5f5" stroke="#6b6966" stroke-width="2"/><rect x="9.5" y="5.8" width="7.3" height="7.3" rx="2.2" fill="none" stroke="#6b6966" stroke-width="2"/><rect x="5.2" y="9.4" width="7.5" height="7.6" rx="2.2" fill="#f5f5f5" stroke="#6b6966" stroke-width="2"/><rect x="29" y="1" width="20.4" height="21" rx="4.2" fill="#f5f5f5" stroke="#6b6966" stroke-width="2"/><path d="M35.2 7.3 L43.4 15.7 M43.4 7.3 L35.2 15.7" stroke="#6b6966" stroke-width="4" stroke-linecap="round"/></svg><div style="left:1493px;top:354px;width:297px;height:692px;background:#fff;border:2px solid #b7b7b7;"></div><svg style="left:1501px;top:357.8px" width="64" height="30" viewBox="0 0 64 30"><rect width="64" height="30" fill="#808080"/><rect x="2" y="2" width="60" height="26" fill="#fff"/><path d="M2 0 L32 30 M34 0 L64 30" stroke="#808080" stroke-width="1.6"/></svg><span class="t" style='left:1582.0px;top:360.6px;font-size:25px;color:#8c8c8c;letter-spacing:1.00px;'>nwell (2)</span><svg style="left:1501px;top:389.9px" width="64" height="30" viewBox="0 0 64 30"><rect width="64" height="30" fill="#d9ffa8"/></svg><span class="t" style='left:1582.0px;top:391.9px;font-size:26px;color:#0a0a0a;font-weight:700;letter-spacing:1.53px;'>active (3)</span><svg style="left:1501px;top:422.0px" width="64" height="30" viewBox="0 0 64 30"><rect width="64" height="30" fill="#f0702c"/><rect x="2" y="2" width="60" height="26" fill="#fff"/><defs><pattern id="p2" patternUnits="userSpaceOnUse" x="0" y="0" width="8" height="8"><rect x="4" y="2" width="2" height="2" fill="#f0702c"/><rect x="0" y="6" width="2" height="2" fill="#f0702c"/></pattern></defs><rect x="2" y="2" width="60" height="26" fill="url(#p2)"/></svg><span class="t" style='left:1582.0px;top:424.9px;font-size:25px;color:#8c8c8c;letter-spacing:0.93px;'>pselect (4)</span><svg style="left:1501px;top:454.1px" width="64" height="30" viewBox="0 0 64 30"><rect width="64" height="30" fill="#9a3cf5"/><rect x="2" y="2" width="60" height="26" fill="#fff"/><defs><pattern id="p3" patternUnits="userSpaceOnUse" x="0" y="0" width="8" height="8"><rect x="4" y="2" width="2" height="2" fill="#9a3cf5"/><rect x="0" y="6" width="2" height="2" fill="#9a3cf5"/></pattern></defs><rect x="2" y="2" width="60" height="26" fill="url(#p3)"/></svg><span class="t" style='left:1582.0px;top:456.1px;font-size:26px;color:#0a0a0a;font-weight:700;letter-spacing:1.39px;'>nselect (5)</span><div style="left:1495px;top:484.74px;width:293px;height:32.5px;background:#4a88c2;"></div><svg style="left:1501px;top:486.2px" width="64" height="30" viewBox="0 0 64 30"><rect width="64" height="30" fill="#b05868"/></svg><span class="t" style='left:1582.0px;top:488.2px;font-size:26px;color:#fff;font-weight:700;letter-spacing:1.36px;'>poly (6)</span><svg style="left:1501px;top:518.4px" width="64" height="30" viewBox="0 0 64 30"><rect width="64" height="30" fill="#5f5f5f"/></svg><span class="t" style='left:1582.0px;top:520.3px;font-size:26px;color:#0a0a0a;font-weight:700;letter-spacing:1.45px;'>contact (7)</span><svg style="left:1501px;top:550.5px" width="64" height="30" viewBox="0 0 64 30"><rect width="64" height="30" fill="#3b7df2"/><rect x="2" y="2" width="60" height="26" fill="#fff"/><defs><pattern id="p6" patternUnits="userSpaceOnUse" x="2" y="2" width="8" height="8"><rect x="0" y="0" width="4" height="4" fill="#3b7df2"/><rect x="4" y="4" width="4" height="4" fill="#3b7df2"/></pattern></defs><rect x="2" y="2" width="60" height="26" fill="url(#p6)"/></svg><span class="t" style='left:1582.0px;top:553.3px;font-size:25px;color:#8c8c8c;letter-spacing:1.27px;'>metal1 (8)</span><svg style="left:1501px;top:582.6px" width="64" height="30" viewBox="0 0 64 30"><rect width="64" height="30" fill="#3b7df2"/><rect x="6" y="6" width="52" height="18" fill="#fff"/><defs><pattern id="p7" patternUnits="userSpaceOnUse" x="2" y="2" width="8" height="8"><rect x="0" y="0" width="4" height="4" fill="#3b7df2"/><rect x="4" y="4" width="4" height="4" fill="#3b7df2"/></pattern></defs><rect x="6" y="6" width="52" height="18" fill="url(#p7)"/></svg><span class="t" style='left:1582.0px;top:585.4px;font-size:25px;color:#8c8c8c;letter-spacing:1.03px;'>via12 (9)</span><svg style="left:1501px;top:614.7px" width="64" height="30" viewBox="0 0 64 30"><rect width="64" height="30" fill="#5a8020"/><rect x="2" y="2" width="60" height="26" fill="#fff"/><defs><pattern id="p8" patternUnits="userSpaceOnUse" x="2" y="3" width="8" height="8"><path d="M-1 -1 L9 9 M9 -1 L-1 9" stroke="#5a8020" stroke-width="1.9"/></pattern></defs><rect x="2" y="2" width="60" height="26" fill="url(#p8)"/></svg><span class="t" style='left:1582.0px;top:617.5px;font-size:25px;color:#8c8c8c;letter-spacing:1.25px;'>metal2 (10)</span><svg style="left:1501px;top:646.8px" width="64" height="30" viewBox="0 0 64 30"><rect width="64" height="30" fill="#557a20"/><rect x="6" y="6" width="52" height="18" fill="#fff"/><defs><pattern id="p9" patternUnits="userSpaceOnUse" x="2" y="3" width="8" height="8"><path d="M-1 -1 L9 9 M9 -1 L-1 9" stroke="#557a20" stroke-width="2.8"/></pattern></defs><rect x="6" y="6" width="52" height="18" fill="url(#p9)"/></svg><span class="t" style='left:1582.0px;top:649.6px;font-size:25px;color:#8c8c8c;letter-spacing:1.24px;'>via23 (11)</span><svg style="left:1501px;top:678.9px" width="64" height="30" viewBox="0 0 64 30"><rect width="64" height="30" fill="#801a80"/><rect x="2" y="2" width="60" height="26" fill="#fff"/><defs><pattern id="p10" patternUnits="userSpaceOnUse" x="2" y="3" width="8" height="8"><path d="M-1 -1 L9 9 M9 -1 L-1 9" stroke="#801a80" stroke-width="2.8"/></pattern></defs><rect x="2" y="2" width="60" height="26" fill="url(#p10)"/></svg><span class="t" style='left:1582.0px;top:681.7px;font-size:25px;color:#8c8c8c;letter-spacing:1.25px;'>metal3 (12)</span><svg style="left:1501px;top:711.0px" width="64" height="30" viewBox="0 0 64 30"><rect width="64" height="30" fill="#771877"/><rect x="6" y="6" width="52" height="18" fill="#fff"/><defs><pattern id="p11" patternUnits="userSpaceOnUse" x="2" y="3" width="8" height="8"><path d="M-1 -1 L9 9 M9 -1 L-1 9" stroke="#771877" stroke-width="2.8"/></pattern></defs><rect x="6" y="6" width="52" height="18" fill="url(#p11)"/></svg><span class="t" style='left:1582.0px;top:713.8px;font-size:25px;color:#8c8c8c;letter-spacing:1.04px;'>via34 (13)</span><svg style="left:1501px;top:743.1px" width="64" height="30" viewBox="0 0 64 30"><rect width="64" height="30" fill="#f09040"/><rect x="2" y="2" width="60" height="26" fill="#fff"/><defs><pattern id="p12" patternUnits="userSpaceOnUse" x="2" y="3" width="8" height="8"><path d="M-1 -1 L9 9 M9 -1 L-1 9" stroke="#f09040" stroke-width="1.9"/></pattern></defs><rect x="2" y="2" width="60" height="26" fill="url(#p12)"/></svg><span class="t" style='left:1582.0px;top:746.0px;font-size:25px;color:#8c8c8c;letter-spacing:1.25px;'>metal4 (14)</span><svg style="left:1501px;top:775.2px" width="64" height="30" viewBox="0 0 64 30"><rect width="64" height="30" fill="#ee8a3c"/><rect x="6" y="6" width="52" height="18" fill="#fff"/><defs><pattern id="p13" patternUnits="userSpaceOnUse" x="2" y="3" width="8" height="8"><path d="M-1 -1 L9 9 M9 -1 L-1 9" stroke="#ee8a3c" stroke-width="1.9"/></pattern></defs><rect x="6" y="6" width="52" height="18" fill="url(#p13)"/></svg><span class="t" style='left:1582.0px;top:778.1px;font-size:25px;color:#8c8c8c;letter-spacing:1.04px;'>via45 (15)</span><svg style="left:1501px;top:807.3px" width="64" height="30" viewBox="0 0 64 30"><rect width="64" height="30" fill="#80ffff"/><rect x="2" y="2" width="60" height="26" fill="#fff"/><defs><pattern id="p14" patternUnits="userSpaceOnUse" x="2" y="3" width="8" height="8"><path d="M-1 -1 L9 9 M9 -1 L-1 9" stroke="#80ffff" stroke-width="1.9"/></pattern></defs><rect x="2" y="2" width="60" height="26" fill="url(#p14)"/></svg><span class="t" style='left:1582.0px;top:810.2px;font-size:25px;color:#8c8c8c;letter-spacing:1.25px;'>metal5 (16)</span><svg style="left:1501px;top:839.5px" width="64" height="30" viewBox="0 0 64 30"><rect width="64" height="30" fill="#80ffff"/><rect x="6" y="6" width="52" height="18" fill="#fff"/><defs><pattern id="p15" patternUnits="userSpaceOnUse" x="2" y="3" width="8" height="8"><path d="M-1 -1 L9 9 M9 -1 L-1 9" stroke="#80ffff" stroke-width="1.9"/></pattern></defs><rect x="6" y="6" width="52" height="18" fill="url(#p15)"/></svg><span class="t" style='left:1582.0px;top:842.3px;font-size:25px;color:#8c8c8c;letter-spacing:1.04px;'>via56 (17)</span><svg style="left:1501px;top:871.6px" width="64" height="30" viewBox="0 0 64 30"><rect width="64" height="30" fill="#80ff90"/><rect x="2" y="2" width="60" height="26" fill="#fff"/><defs><pattern id="p16" patternUnits="userSpaceOnUse" x="2" y="3" width="8" height="8"><path d="M-1 -1 L9 9 M9 -1 L-1 9" stroke="#80ff90" stroke-width="1.9"/></pattern></defs><rect x="2" y="2" width="60" height="26" fill="url(#p16)"/></svg><span class="t" style='left:1582.0px;top:874.4px;font-size:25px;color:#8c8c8c;letter-spacing:1.25px;'>metal6 (18)</span><svg style="left:1501px;top:903.7px" width="64" height="30" viewBox="0 0 64 30"><rect width="64" height="30" fill="#7a5422"/><rect x="4" y="4" width="56" height="22" fill="#fff"/></svg><span class="t" style='left:1582.0px;top:906.5px;font-size:25px;color:#8c8c8c;letter-spacing:1.15px;'>prboundary (99)</span><svg style="left:1501px;top:935.8px" width="64" height="30" viewBox="0 0 64 30"><rect width="64" height="30" fill="#000060"/><rect x="6" y="6" width="52" height="18" fill="#000"/></svg><span class="t" style='left:1582.0px;top:938.6px;font-size:25px;color:#8c8c8c;letter-spacing:1.15px;'>track (100)</span><svg style="left:1501px;top:967.9px" width="64" height="30" viewBox="0 0 64 30"><rect width="64" height="30" fill="#f03cf0"/><rect x="6" y="6" width="52" height="18" fill="#fff"/><defs><pattern id="p19" patternUnits="userSpaceOnUse" x="2" y="3" width="8" height="8"><path d="M-1 -1 L9 9 M9 -1 L-1 9" stroke="#f03cf0" stroke-width="1.9"/></pattern></defs><rect x="6" y="6" width="52" height="18" fill="url(#p19)"/></svg><span class="t" style='left:1582.0px;top:970.7px;font-size:25px;color:#8c8c8c;letter-spacing:1.10px;'>metal1 label (...</span><div style="left:1493.8px;top:1047.4px;width:46px;height:43.8px;background:linear-gradient(#fefefe,#eaeaea);border:2px solid #b9b9b9;border-radius:6px;"></div><svg style="left:1496.3px;top:1050px" width="40" height="38" viewBox="0 0 40 38"><path d="M13 6.3 H28 V12.9 H34.5 L20.5 27.2 L6.4 12.9 H13 Z M10.6 30 H30.3 V32.6 H10.6 Z" fill="#303030"/></svg><div style="left:1542.2px;top:1047.4px;width:46px;height:43.8px;background:linear-gradient(#fefefe,#eaeaea);border:2px solid #b9b9b9;border-radius:6px;"></div><svg style="left:1544.7px;top:1050px" width="40" height="38" viewBox="0 0 40 38"><path d="M13 6.3 H27.6 V12.9 H34.6 L20.3 27.8 L5.9 12.9 H13 Z" fill="#303030"/></svg><div style="left:1590.6px;top:1047.4px;width:46px;height:43.8px;background:linear-gradient(#fefefe,#eaeaea);border:2px solid #b9b9b9;border-radius:6px;"></div><svg style="left:1593.1px;top:1050px" width="40" height="38" viewBox="0 0 40 38"><path d="M12.5 29.6 H27.4 V24 H34 L20 8.1 L5.9 24 H12.5 Z" fill="#303030"/></svg><div style="left:1639px;top:1047.4px;width:46px;height:43.8px;background:linear-gradient(#fefefe,#eaeaea);border:2px solid #b9b9b9;border-radius:6px;"></div><svg style="left:1641.5px;top:1050px" width="40" height="38" viewBox="0 0 40 38"><path d="M12.5 29.6 H27.2 V24 H34 L19.7 8.7 L5.3 24 H12.5 Z M9.5 3.9 H29.8 V6.3 H9.5 Z" fill="#303030"/></svg><div style="left:1627px;top:1096.3px;width:2px;height:2px;background:#bcbcbc;"></div><div style="left:1633px;top:1096.3px;width:2px;height:2px;background:#bcbcbc;"></div><div style="left:1639px;top:1096.3px;width:2px;height:2px;background:#bcbcbc;"></div><div style="left:1645px;top:1096.3px;width:2px;height:2px;background:#bcbcbc;"></div><div style="left:1651px;top:1096.3px;width:2px;height:2px;background:#bcbcbc;"></div><div style="left:1657px;top:1096.3px;width:2px;height:2px;background:#bcbcbc;"></div><span class="t" style='left:1502.0px;top:1111.5px;font-size:25px;color:#0d0d0d;letter-spacing:0.57px;'>Layer Toolbox</span><svg style="left:1735.5px;top:1112px" width="52" height="24" viewBox="0 0 52 24"><rect x="1" y="1" width="20.3" height="21" rx="4.2" fill="#f5f5f5" stroke="#6b6966" stroke-width="2"/><rect x="9.5" y="5.8" width="7.3" height="7.3" rx="2.2" fill="none" stroke="#6b6966" stroke-width="2"/><rect x="5.2" y="9.4" width="7.5" height="7.6" rx="2.2" fill="#f5f5f5" stroke="#6b6966" stroke-width="2"/><rect x="29" y="1" width="20.4" height="21" rx="4.2" fill="#f5f5f5" stroke="#6b6966" stroke-width="2"/><path d="M35.2 7.3 L43.4 15.7 M43.4 7.3 L35.2 15.7" stroke="#6b6966" stroke-width="4" stroke-linecap="round"/></svg><div style="left:1493px;top:1179.0px;width:297px;height:3.6px;background:linear-gradient(#fafafa 0,#fafafa 55%,#b9b4b0 100%);"></div><div style="left:1494.5px;top:1144.5px;width:293.5px;height:34.5px;background:#4a88c2;"></div><div style="left:1788px;top:1143.5px;width:2px;height:38px;background:#a9a9a9;"></div><div style="left:1495.5px;top:1147.0px;width:27.5px;height:27px;background:#fff;border-right:1.5px solid #d8cfc9;border-bottom:1.5px solid #d8cfc9;"></div><span class="t" style='left:1533.5px;top:1150.2px;font-size:25px;color:#fff;letter-spacing:0.56px;'>Color</span><div style="left:1493px;top:1217.15px;width:297px;height:3.6px;background:linear-gradient(#fafafa 0,#fafafa 55%,#b9b4b0 100%);"></div><div style="left:1494.5px;top:1182.65px;width:293.5px;height:34.5px;background:#4a88c2;"></div><div style="left:1788px;top:1181.65px;width:2px;height:38px;background:#a9a9a9;"></div><div style="left:1495.5px;top:1185.15px;width:27.5px;height:27px;background:#fff;border-right:1.5px solid #d8cfc9;border-bottom:1.5px solid #d8cfc9;"></div><span class="t" style='left:1533.5px;top:1188.4px;font-size:25px;color:#fff;letter-spacing:0.71px;'>Frame color</span><div style="left:1493px;top:1255.3px;width:297px;height:3.6px;background:linear-gradient(#fafafa 0,#fafafa 55%,#b9b4b0 100%);"></div><div style="left:1494.5px;top:1220.8px;width:293.5px;height:34.5px;background:#4a88c2;"></div><div style="left:1788px;top:1219.8px;width:2px;height:38px;background:#a9a9a9;"></div><div style="left:1495.5px;top:1223.3px;width:27.5px;height:27px;background:#fff;border-right:1.5px solid #d8cfc9;border-bottom:1.5px solid #d8cfc9;"></div><span class="t" style='left:1533.5px;top:1226.5px;font-size:25px;color:#fff;letter-spacing:0.84px;'>Stipple</span><div style="left:1493px;top:1293.45px;width:297px;height:3.6px;background:linear-gradient(#fafafa 0,#fafafa 55%,#b9b4b0 100%);"></div><div style="left:1494.5px;top:1258.95px;width:293.5px;height:34.5px;background:#4a88c2;"></div><div style="left:1788px;top:1257.95px;width:2px;height:38px;background:#a9a9a9;"></div><div style="left:1495.5px;top:1261.45px;width:27.5px;height:27px;background:#fff;border-right:1.5px solid #d8cfc9;border-bottom:1.5px solid #d8cfc9;"></div><span class="t" style='left:1533.5px;top:1264.7px;font-size:25px;color:#fff;letter-spacing:1.17px;'>Animation</span><div style="left:1493px;top:1331.6px;width:297px;height:3.6px;background:linear-gradient(#fafafa 0,#fafafa 55%,#b9b4b0 100%);"></div><div style="left:1494.5px;top:1297.1px;width:293.5px;height:34.5px;background:#4a88c2;"></div><div style="left:1788px;top:1296.1px;width:2px;height:38px;background:#a9a9a9;"></div><div style="left:1495.5px;top:1299.6px;width:27.5px;height:27px;background:#fff;border-right:1.5px solid #d8cfc9;border-bottom:1.5px solid #d8cfc9;"></div><span class="t" style='left:1533.5px;top:1302.8px;font-size:25px;color:#fff;letter-spacing:0.73px;'>Style</span><div style="left:1493px;top:1369.75px;width:297px;height:3.6px;background:linear-gradient(#fafafa 0,#fafafa 55%,#b9b4b0 100%);"></div><div style="left:1494.5px;top:1335.25px;width:293.5px;height:34.5px;background:#4a88c2;"></div><div style="left:1788px;top:1334.25px;width:2px;height:38px;background:#a9a9a9;"></div><div style="left:1495.5px;top:1337.75px;width:27.5px;height:27px;background:#fff;border-right:1.5px solid #d8cfc9;border-bottom:1.5px solid #d8cfc9;"></div><span class="t" style='left:1533.5px;top:1341.0px;font-size:25px;color:#fff;letter-spacing:0.96px;'>Visibility</span><span class="t" style='left:11.6px;top:1381.3px;font-size:27px;color:#0d0d0d;font-weight:700;'>T</span><span class="t" style='left:43.5px;top:1383.0px;font-size:25px;color:#0d0d0d;letter-spacing:1.34px;'>tinyflow-180nm</span><span class="t" style='left:273.0px;top:1383.0px;font-size:25px;color:#0d0d0d;font-weight:700;'>G</span><span class="t" style='left:1319.5px;top:1382.5px;font-size:25px;color:#0d0d0d;font-weight:700;letter-spacing:1.69px;'>xy</span><span class="t" style='left:1486.0px;top:1382.5px;font-size:25px;color:#0d0d0d;letter-spacing:0.72px;'>-0.990</span><span class="t" style='left:1707.0px;top:1382.5px;font-size:25px;color:#0d0d0d;letter-spacing:1.23px;'>0.810</span></div><div style="left:0px;top:0px;width:1790px;height:56px;background:#fff;"></div><div style="left:16px;top:16px;width:24px;height:24px;border-radius:12px;background:#ee6a5f;border:1px solid #d8574c;"></div><div style="left:56px;top:16px;width:24px;height:24px;border-radius:12px;background:#f5bd4f;border:1px solid #dba43c;"></div><div style="left:96px;top:16px;width:24px;height:24px;border-radius:12px;background:#61c454;border:1px solid #4fae42;"></div><span class="t" style='left:714.0px;top:14.0px;font-size:26px;color:#3e3e3e;font-weight:700;letter-spacing:0.76px;transform:rotate(0.03deg);will-change:transform;'>ecelinux-14.ece.cornell.edu</span>
</div>
</body></html>
